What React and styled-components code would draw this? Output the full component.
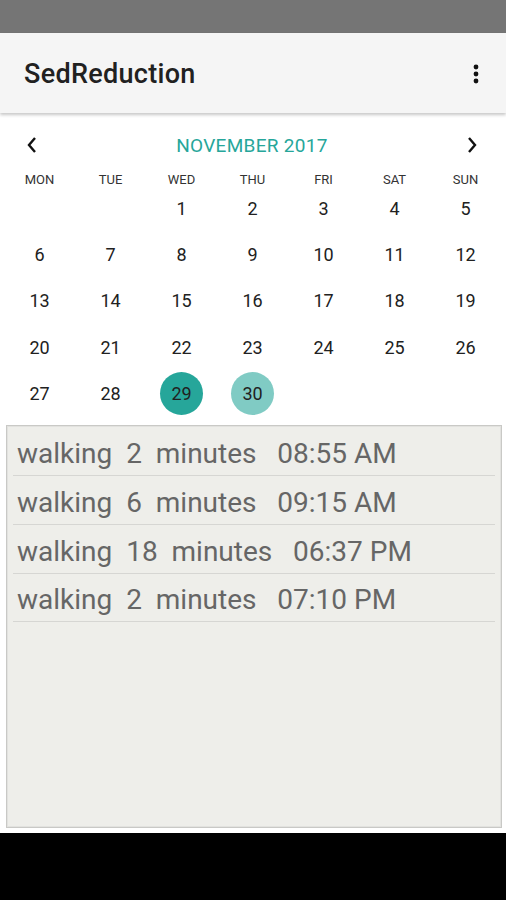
import styled, { createGlobalStyle } from "styled-components";

const GlobalStyle = createGlobalStyle`
  html, body {
    margin: 0;
    padding: 0;
    background: #000;
  }
  body {
    font-family: Roboto, "Noto Sans", sans-serif;
  }
`;

const Screen = styled.div`
  width: 506px;
  height: 900px;
  display: flex;
  flex-direction: column;
  background: #000;
  overflow: hidden;
`;

const StatusBar = styled.div`
  height: 33px;
  background: #757575;
  flex-shrink: 0;
`;

const AppBar = styled.div`
  height: 80px;
  flex-shrink: 0;
  background: #f5f5f5;
  display: flex;
  align-items: center;
  justify-content: space-between;
  padding: 2px 26px 0 24px;
  box-sizing: border-box;
  box-shadow: 0 2px 3px rgba(0, 0, 0, 0.22);
  position: relative;
  z-index: 1;
`;

const Title = styled.h1`
  margin: 0;
  font-size: 27px;
  font-weight: 500;
  color: #212121;
  letter-spacing: 0.3px;
`;

const Content = styled.div`
  flex: 1;
  background: #fff;
  display: flex;
  flex-direction: column;
  padding-bottom: 5px;
`;

const Calendar = styled.div`
  padding: 12px 5px 0 4px;
`;

const MonthHeader = styled.div`
  height: 40px;
  display: flex;
  align-items: center;
  justify-content: space-between;
  padding: 0 21px 0 20px;
`;

const MonthLabel = styled.span`
  font-size: 19px;
  color: #26a69a;
  letter-spacing: 0.3px;
`;

const Arrow = styled.button`
  border: none;
  background: none;
  padding: 0;
  width: 16px;
  height: 20px;
  display: flex;
  align-items: center;
  justify-content: center;
`;

const WeekRow = styled.div`
  display: grid;
  grid-template-columns: repeat(7, 1fr);
  height: 16px;
  margin-top: 6px;
  align-items: center;
`;

const WeekDay = styled.span`
  text-align: center;
  font-size: 13px;
  color: #333;
`;

const DayGrid = styled.div`
  display: grid;
  grid-template-columns: repeat(7, 1fr);
  grid-auto-rows: 46.3px;
  margin-top: -2px;
`;

const DayCell = styled.div`
  display: flex;
  align-items: center;
  justify-content: center;
`;

const DayNum = styled.span`
  width: 43px;
  height: 43px;
  border-radius: 50%;
  display: flex;
  align-items: center;
  justify-content: center;
  font-size: 18px;
  color: #212121;
  background: ${(p) => p.$bg || "transparent"};
`;

const ActivityList = styled.div`
  flex: 1;
  margin: 9px 4px 0 6px;
  padding-top: 1px;
  background: #eeeeea;
  border: 1px solid #c9c9c6;
  box-shadow: inset 0 0 0 1px #e2e2df;
`;

const ActivityRow = styled.div`
  margin: 0 6px;
  border-bottom: 1px solid #d6d6d3;
  display: flex;
  align-items: center;
  padding: 5px 0 0 4px;
  box-sizing: border-box;
  height: 48.7px;
  font-size: 28px;
  color: #666;
  white-space: pre;
`;

const BottomBar = styled.div`
  height: 67px;
  background: #000;
  flex-shrink: 0;
`;

const MoreIcon = () => (
  <svg width="8" height="24" viewBox="0 0 8 24">
    <circle cx="4" cy="5" r="2.4" fill="#111" />
    <circle cx="4" cy="12" r="2.4" fill="#111" />
    <circle cx="4" cy="19" r="2.4" fill="#111" />
  </svg>
);

const Chevron = ({ dir }) => (
  <svg width="12" height="18" viewBox="0 0 12 18">
    <path
      d={dir === "left" ? "M9 2 L3 9 L9 16" : "M3 2 L9 9 L3 16"}
      fill="none"
      stroke="#111"
      strokeWidth="2.4"
    />
  </svg>
);

const weekDays = ["MON", "TUE", "WED", "THU", "FRI", "SAT", "SUN"];

const days = [null, null, ...Array.from({ length: 30 }, (_, i) => i + 1)];

const highlight = { 29: "#26a69a", 30: "#80cbc4" };

const activities = [
  "walking  2  minutes   08:55 AM",
  "walking  6  minutes   09:15 AM",
  "walking  18  minutes   06:37 PM",
  "walking  2  minutes   07:10 PM",
];

export default function App() {
  return (
    <Screen>
      <GlobalStyle />
      <StatusBar />
      <AppBar>
        <Title>SedReduction</Title>
        <MoreIcon />
      </AppBar>
      <Content>
        <Calendar>
          <MonthHeader>
            <Arrow>
              <Chevron dir="left" />
            </Arrow>
            <MonthLabel>NOVEMBER 2017</MonthLabel>
            <Arrow>
              <Chevron dir="right" />
            </Arrow>
          </MonthHeader>
          <WeekRow>
            {weekDays.map((d) => (
              <WeekDay key={d}>{d}</WeekDay>
            ))}
          </WeekRow>
          <DayGrid>
            {days.map((d, i) => (
              <DayCell key={i}>
                {d && <DayNum $bg={highlight[d]}>{d}</DayNum>}
              </DayCell>
            ))}
          </DayGrid>
        </Calendar>
        <ActivityList>
          {activities.map((a) => (
            <ActivityRow key={a}>{a}</ActivityRow>
          ))}
        </ActivityList>
      </Content>
      <BottomBar />
    </Screen>
  );
}
